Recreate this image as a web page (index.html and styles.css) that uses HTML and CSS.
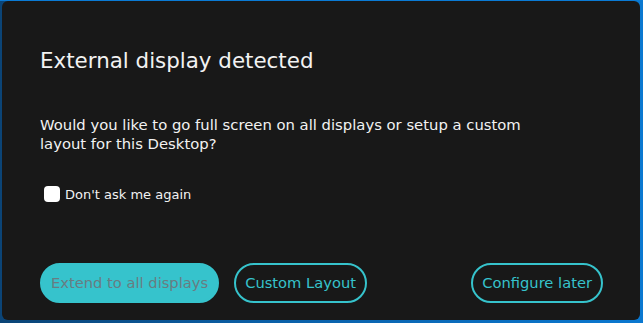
FILE: index.html
```html
<!DOCTYPE html>
<html lang="en">
<head>
  <meta charset="UTF-8">
  <meta name="viewport" content="width=device-width, initial-scale=1.0">
  <title>External display detected</title>
  <link rel="stylesheet" href="styles.css">
</head>
<body>
  <div class="dialog">
    <h1 class="dialog-title">External display detected</h1>
    <p class="dialog-text">Would you like to go full screen on all displays or setup a custom layout for this Desktop?</p>
    <label class="ask-again">
      <input type="checkbox" class="ask-box">
      <span>Don't ask me again</span>
    </label>
    <div class="actions">
      <button class="btn btn-filled">Extend to all displays</button>
      <button class="btn btn-outline">Custom Layout</button>
      <button class="btn btn-outline btn-later">Configure later</button>
    </div>
  </div>
</body>
</html>
```

FILE: styles.css
```css
html, body {
  height: 100%;
}

body {
  margin: 0;
  font-family: "DejaVu Sans", Verdana, sans-serif;
  background: linear-gradient(90deg, #0b4476 0%, #0a5fa6 40%, #0a78d0 100%);
  border-top: 1px solid #0a7ad4;
  box-sizing: border-box;
  display: flex;
  padding: 0 3px 3px 2px;
}

.dialog {
  flex: 1;
  background-color: #181818;
  border-radius: 6px;
  padding: 46px 37px 17px 38px;
  display: flex;
  flex-direction: column;
  color: #f2f2f2;
}

.dialog-title {
  margin: 0;
  font-size: 21.4px;
  font-weight: normal;
  line-height: 28px;
}

.dialog-text {
  margin: 40px 0 0;
  width: 500px;
  font-size: 14.8px;
  line-height: 19px;
}

.ask-again {
  margin-top: 33px;
  display: flex;
  align-items: center;
  gap: 5px;
  font-size: 13px;
  margin-left: 4px;
}

.ask-box {
  appearance: none;
  margin: 0;
  width: 16px;
  height: 16px;
  background: #ffffff;
  border-radius: 4px;
}

.actions {
  margin-top: auto;
  display: flex;
  gap: 15px;
}

.btn {
  height: 40px;
  padding: 0 9px 1px;
  border-radius: 20px;
  font-family: inherit;
  font-size: 14.7px;
  background: transparent;
  border: 2px solid #36c3cc;
  color: #36c3cc;
}

.btn-filled {
  background-color: #36c3cc;
  color: #697c82;
}

.btn-later {
  margin-left: auto;
}
```
